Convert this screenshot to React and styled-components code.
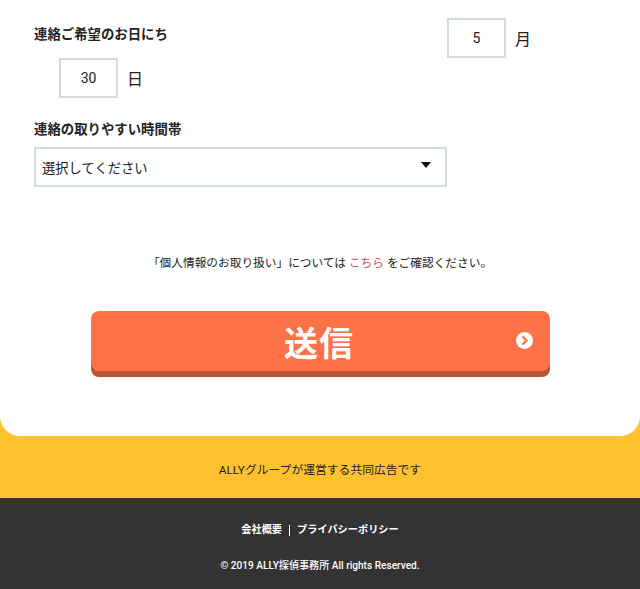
import styled, { createGlobalStyle } from 'styled-components';

const GlobalStyle = createGlobalStyle`
  html, body {
    margin: 0;
    padding: 0;
    background: #fff;
  }
  body {
    font-family: Roboto, "Noto Sans CJK JP", sans-serif;
    color: #222;
  }
`;

const Page = styled.div`
  width: 640px;
  height: 589px;
  overflow: hidden;
  background: #ffc12f;
`;

const Card = styled.main`
  height: 436px;
  box-sizing: border-box;
  padding: 18px 34px 0;
  background: #fff;
  border-radius: 0 0 20px 20px;
`;

const MonthRow = styled.div`
  display: flex;
  justify-content: space-between;
  height: 40px;
  padding-right: 75px;
`;

const DayRow = styled.div`
  display: flex;
  height: 40px;
  padding-left: 25px;
`;

const Label = styled.div`
  font-size: 13.4px;
  line-height: 20px;
  font-weight: 700;
  color: #222;
  padding-top: ${(props) => props.$top}px;
`;

const DateGroup = styled.div`
  display: flex;
  align-items: center;
  gap: 9px;
  font-size: 16px;
  color: #222;
`;

const DateBox = styled.div`
  width: 59px;
  height: 40px;
  box-sizing: border-box;
  display: flex;
  align-items: center;
  justify-content: center;
  border: 2px solid #d3dcdc;
  font-size: 14px;
  color: #222;
`;

const TimeLabel = styled(Label)`
  margin-top: 22px;
`;

const SelectBox = styled.div`
  width: 413px;
  height: 40px;
  margin-top: 7px;
  box-sizing: border-box;
  padding: 0 14px 0 6px;
  display: flex;
  align-items: center;
  justify-content: space-between;
  border: 2px solid #d3dcdc;
  font-size: 13.3px;
  color: #222;
`;

const Caret = styled.span`
  width: 0;
  height: 0;
  margin-bottom: 5px;
  border-left: 5px solid transparent;
  border-right: 5px solid transparent;
  border-top: 6px solid #111;
`;

const Notice = styled.p`
  margin: 66px 0 0;
  font-size: 11.7px;
  line-height: 20px;
  text-align: center;
  color: #222;
`;

const NoticeLink = styled.span`
  color: #e0455f;
`;

const SubmitButton = styled.div`
  position: relative;
  width: 459px;
  height: 60px;
  box-sizing: border-box;
  padding-right: 3px;
  margin: 38px 0 0 57px;
  display: flex;
  align-items: center;
  justify-content: center;
  background: #ff7247;
  border-radius: 8px;
  box-shadow: 0 6px 0 #b85433;
  color: #fff;
  font-size: 34px;
  font-weight: 700;
  letter-spacing: 1px;
`;

const ArrowIcon = styled.svg`
  position: absolute;
  right: 17px;
  top: 21px;
  width: 17px;
  height: 17px;
`;

const Sponsor = styled.div`
  height: 62px;
  box-sizing: border-box;
  padding-top: 2px;
  display: flex;
  align-items: center;
  justify-content: center;
  font-size: 11.8px;
  color: #222;
`;

const Footer = styled.footer`
  height: 91px;
  box-sizing: border-box;
  padding-top: 24px;
  background: #333;
  color: #fff;
  text-align: center;
`;

const FooterLinks = styled.div`
  display: flex;
  justify-content: center;
  align-items: center;
  gap: 7px;
  font-size: 10.2px;
  line-height: 16px;
  font-weight: 700;
`;

const Divider = styled.span`
  width: 1px;
  height: 11px;
  background: #fff;
`;

const Copyright = styled.div`
  margin-top: 20px;
  font-size: 10.1px;
  line-height: 16px;
  font-weight: 500;
`;

export default function App() {
  return (
    <Page>
      <GlobalStyle />
      <Card>
        <MonthRow>
          <Label $top={7}>連絡ご希望のお日にち</Label>
          <DateGroup>
            <DateBox>5</DateBox>月
          </DateGroup>
        </MonthRow>
        <DayRow>
          <DateGroup>
            <DateBox>30</DateBox>日
          </DateGroup>
        </DayRow>
        <TimeLabel $top={0}>連絡の取りやすい時間帯</TimeLabel>
        <SelectBox>
          選択してください
          <Caret />
        </SelectBox>
        <Notice>
          「個人情報のお取り扱い」については <NoticeLink>こちら</NoticeLink> をご確認ください。
        </Notice>
        <SubmitButton>
          送信
          <ArrowIcon viewBox="0 0 17 17">
            <circle cx="8.5" cy="8.5" r="8.5" fill="#fff" />
            <path d="M6.5 4.5 10.5 8.5 6.5 12.5" fill="none" stroke="#ff7247" strokeWidth="2.4" />
          </ArrowIcon>
        </SubmitButton>
      </Card>
      <Sponsor>ALLYグループが運営する共同広告です</Sponsor>
      <Footer>
        <FooterLinks>
          <span>会社概要</span>
          <Divider />
          <span>プライバシーポリシー</span>
        </FooterLinks>
        <Copyright>© 2019 ALLY探偵事務所 All rights Reserved.</Copyright>
      </Footer>
    </Page>
  );
}
